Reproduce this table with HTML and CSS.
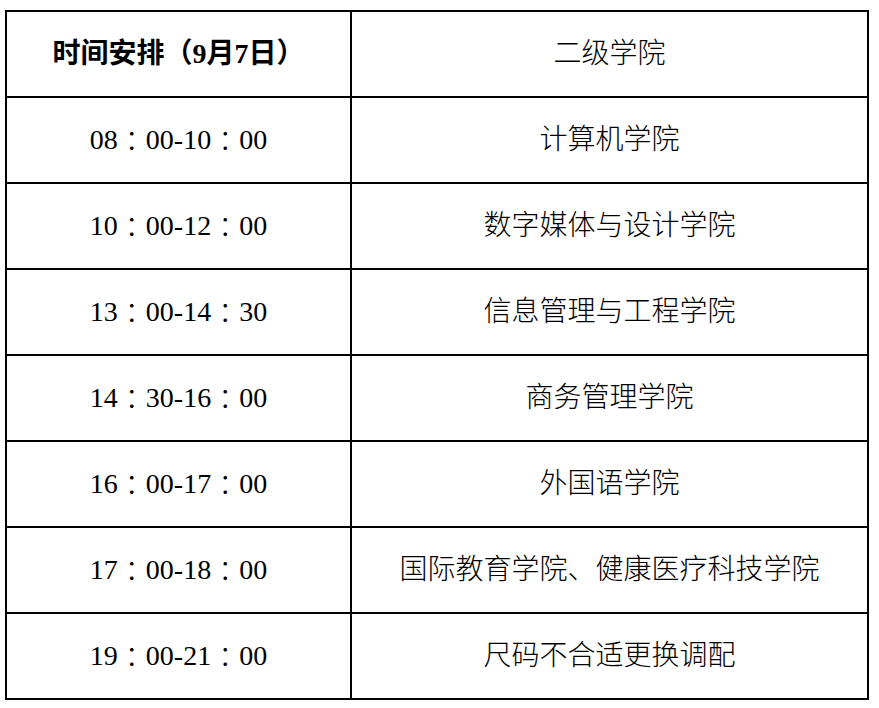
FILE: index.html
```html
<!DOCTYPE html>
<html lang="zh-CN">
<head>
<meta charset="utf-8">
<title>时间安排</title>
<link rel="stylesheet" href="styles.css">
</head>
<body>
<div class="sheet">
  <div class="cell head">时间安排（9月7日）</div>
  <div class="cell head-r">二级学院</div>
  <div class="cell">08<span class="colon">：</span>00-10<span class="colon">：</span>00</div>
  <div class="cell">计算机学院</div>
  <div class="cell">10<span class="colon">：</span>00-12<span class="colon">：</span>00</div>
  <div class="cell">数字媒体与设计学院</div>
  <div class="cell">13<span class="colon">：</span>00-14<span class="colon">：</span>30</div>
  <div class="cell">信息管理与工程学院</div>
  <div class="cell">14<span class="colon">：</span>30-16<span class="colon">：</span>00</div>
  <div class="cell">商务管理学院</div>
  <div class="cell">16<span class="colon">：</span>00-17<span class="colon">：</span>00</div>
  <div class="cell">外国语学院</div>
  <div class="cell">17<span class="colon">：</span>00-18<span class="colon">：</span>00</div>
  <div class="cell">国际教育学院、健康医疗科技学院</div>
  <div class="cell">19<span class="colon">：</span>00-21<span class="colon">：</span>00</div>
  <div class="cell">尺码不合适更换调配</div>
</div>
</body>
</html>
```
FILE: styles.css
```css
html, body {
  margin: 0;
  padding: 0;
  background: #fff;
}
body {
  font-family: "Liberation Serif", "Noto Sans CJK SC", serif;
  color: #000;
}
.sheet {
  margin: 10px 0 0 5px;
  width: 864px;
  box-sizing: border-box;
  display: grid;
  grid-template-columns: 343px 515px;
  grid-template-rows: repeat(8, 84px);
  gap: 2px;
  padding: 2px;
  background: #000;
}
.cell {
  background: #fff;
  display: flex;
  align-items: center;
  justify-content: center;
  font-size: 28px;
  font-weight: 300;
  line-height: 1;
  white-space: nowrap;
}
.colon {
  font-family: "Noto Sans CJK TC", sans-serif;
}
.head {
  font-weight: 700;
}
.head-r {
  font-weight: 300;
}
```
